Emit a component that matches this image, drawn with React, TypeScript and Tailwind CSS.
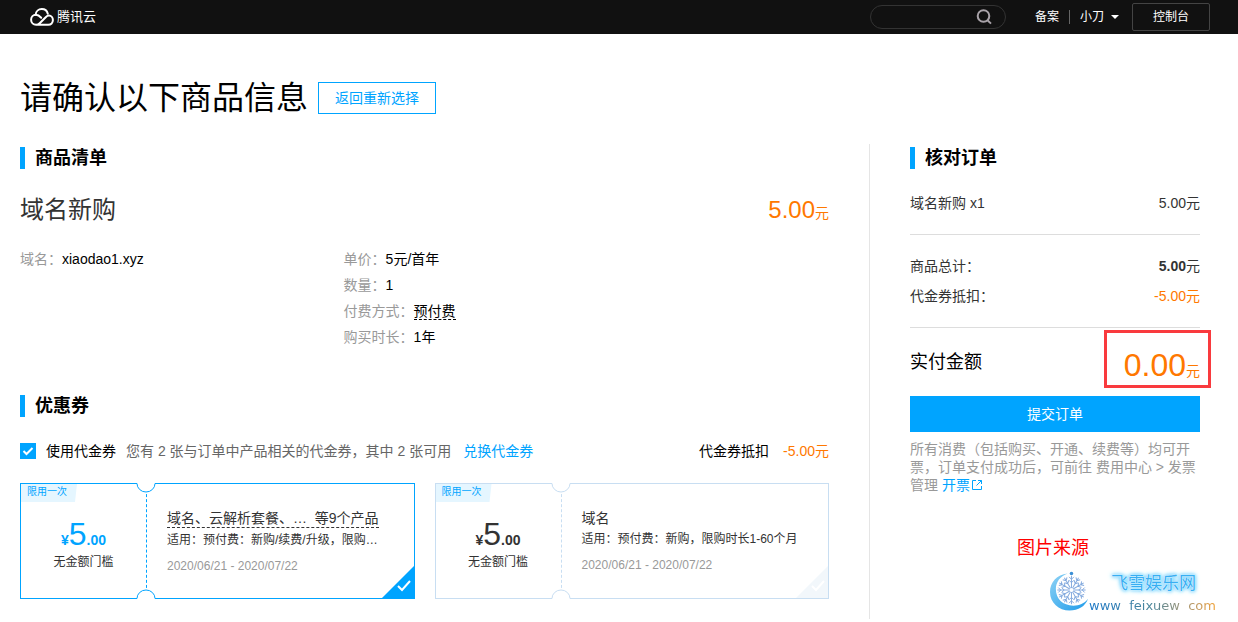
import { useState } from "react";
import type { ReactNode } from "react";

interface Coupon {
  id: number;
  title: string;
  usage: string;
  period: string;
  underlined?: boolean;
}

const coupons: Coupon[] = [
  {
    id: 1,
    title: "域名、云解析套餐、…  等9个产品",
    usage: "适用：预付费：新购/续费/升级，限购…",
    period: "2020/06/21 - 2020/07/22",
    underlined: true,
  },
  {
    id: 2,
    title: "域名",
    usage: "适用：预付费：新购，限购时长1-60个月",
    period: "2020/06/21 - 2020/07/22",
  },
];

const productSpecs = [
  { label: "单价：", value: "5元/首年" },
  { label: "数量：", value: "1" },
  { label: "付费方式：", value: "预付费", underlined: true },
  { label: "购买时长：", value: "1年" },
];

function CloudLogo() {
  return (
    <svg
      className="w-6 h-[18px]"
      viewBox="0 0 24 18"
      fill="none"
      stroke="currentColor"
      strokeWidth="2"
      strokeLinecap="round"
      strokeLinejoin="round"
    >
      <path d="M5.6 6.800C5.800 3.400 8.500 1.100 11.800 1.100c3 0 5.300 1.900 6 4.700" />
      <path d="M11.200 9.700C9.600 8 8.200 6.800 5.900 6.800 3.200 6.800 1.100 9 1.100 11.800s2.200 5 5 5c1.500 0 2.500-.5 3.600-1.600l6-6c.9-.9 1.900-1.600 3.300-1.600 2.200 0 3.900 1.900 3.900 4.500 0 2.700-1.900 4.700-4.600 4.700H6.500" />
    </svg>
  );
}

function Header() {
  return (
    <header className="flex items-center justify-between h-[34px] pl-[30px] pr-7 bg-[#111] text-white text-xs">
      <a href="#" className="flex items-center gap-[3px] text-[13px]">
        <CloudLogo />
        腾讯云
      </a>
      <div className="flex items-center">
        <div className="relative mr-[29px]">
          <input
            type="search"
            aria-label="搜索"
            className="block w-[136px] h-6 pl-3 pr-8 rounded-full border border-[#333] bg-transparent outline-none"
          />
          <svg
            className="absolute right-[14px] top-1 w-4 h-4 text-[#a9a3a9] pointer-events-none"
            viewBox="0 0 16 16"
            fill="none"
            stroke="currentColor"
            strokeWidth="2"
          >
            <circle cx="7.500" cy="7" r="5.800" />
            <path d="M11.500 11.200 15 14.600" />
          </svg>
        </div>
        <a href="#">备案</a>
        <span className="w-px h-[14px] mx-[10px] bg-[#666]" />
        <button type="button" className="flex items-center gap-[7px] mr-[13px]">
          小刀
          <svg className="w-2 h-1" viewBox="0 0 8 4" fill="currentColor">
            <path d="M0 0h8L4 4z" />
          </svg>
        </button>
        <a
          href="#"
          className="flex items-center justify-center w-[78px] h-7 border border-[#444] rounded-xs"
        >
          控制台
        </a>
      </div>
    </header>
  );
}

function SectionTitle({ children }: { children: ReactNode }) {
  return (
    <h2 className="flex items-center gap-[10px] text-lg leading-7 font-bold">
      <span className="w-[5px] h-[22px] bg-[#00a4ff]" />
      {children}
    </h2>
  );
}

interface CouponCardProps {
  coupon: Coupon;
  selected: boolean;
  onSelect: () => void;
}

function CouponCard({ coupon, selected, onSelect }: CouponCardProps) {
  return (
    <button
      type="button"
      aria-pressed={selected}
      onClick={onSelect}
      className={`relative flex h-[116px] border text-left text-[#333] ${
        selected ? "border-[#00a4ff]" : "border-[#c8def2]"
      }`}
    >
      {/* Tag */}
      <span className="absolute left-0 top-0 h-[18px] pl-[6px] pr-[10px] bg-[#e5f6ff] text-[#00a4ff] text-[10px] leading-4 [clip-path:polygon(0_0,100%_0,calc(100%-2px)_100%,0_100%)]">
        限用一次
      </span>

      {/* Amount */}
      <span
        className={`flex flex-col items-center justify-center w-[126px] h-full shrink-0 border-r border-dashed pt-2 ${
          selected ? "border-[#00a4ff]" : "border-[#c8def2]"
        }`}
      >
        <span
          className={`flex items-baseline text-sm leading-7 font-bold ${
            selected ? "text-[#00a4ff]" : ""
          }`}
        >
          ¥<span className="text-[32px] leading-7 font-normal">5</span>.00
        </span>
        <span className="text-xs">无金额门槛</span>
      </span>

      {/* Notches */}
      {["top-[-2px]", "bottom-[-2px] rotate-180"].map((position) => (
        <svg
          key={position}
          className={`absolute left-[115px] w-5 h-3 ${position} ${
            selected ? "text-[#00a4ff]" : "text-[#c8def2]"
          }`}
          viewBox="0 0 20 12"
        >
          <path d="M1 0h18v2a9 8.500 0 0 1-18 0z" fill="#fff" />
          <path d="M1 1.500a9 8.500 0 0 0 18 0" fill="none" stroke="currentColor" />
        </svg>
      ))}

      {/* Description */}
      <span className="flex flex-col items-start justify-center h-full pl-5 text-xs">
        <span
          className={`text-sm leading-[18px] whitespace-pre ${
            coupon.underlined ? "border-b border-dashed border-[#333]" : ""
          }`}
        >
          {coupon.title}
        </span>
        <span className="leading-6">{coupon.usage}</span>
        <span className="mt-[6px] leading-4 text-[#999]">{coupon.period}</span>
      </span>

      {/* Corner mark */}
      <svg
        className={`absolute right-0 bottom-0 w-8 h-8 ${
          selected ? "text-[#00a4ff]" : "text-[#f2f7fb]"
        }`}
        viewBox="0 0 32 32"
      >
        <path d="M32 0v32H0z" fill="currentColor" />
        <path d="m16 20 4 4 8-9" fill="none" stroke="#fff" strokeWidth="2" />
      </svg>
    </button>
  );
}

function SnowMoon() {
  const rays = [0, 30, 60, 90, 120, 150, 180, 210, 240, 270, 300, 330];

  return (
    <svg className="w-10 h-[42px]" viewBox="0 0 40 42" fill="none">
      <defs>
        <linearGradient id="moon" x1="0" y1="0" x2="1" y2="1">
          <stop offset="0" stopColor="#8fd3f5" />
          <stop offset="1" stopColor="#1f9bea" />
        </linearGradient>
      </defs>
      <path
        d="M18 3C7 4 0 12 0 22c0 11 9 19 20 19 9 0 16-4 19-12-4 5-9 7-15 7C13 36 6 29 6 19 6 12 10 6 18 3z"
        fill="url(#moon)"
      />
      {rays.map((angle) => (
        <g
          key={angle}
          transform={`rotate(${angle} 22 20)`}
          stroke="#84aade"
          strokeWidth="1"
        >
          <path d="M22 18V5.500M22 9l-2.500-2.500M22 9l2.500-2.500M22 12.500l-2.500-2.500M22 12.500l2.500-2.500" />
        </g>
      ))}
      <circle cx="22" cy="3" r="1.800" fill="#3b8fd6" />
    </svg>
  );
}

function SourceCredit() {
  return (
    <div className="mt-10 ml-[107px]">
      <p className="text-lg leading-7 text-[#f00]">图片来源</p>
      <div className="flex mt-2 ml-[33px] -mr-4">
        <SnowMoon />
        <div className="whitespace-nowrap">
          <div className="ml-[22px] text-[17px] leading-7 text-[#38aef2] [text-shadow:0_0_1px_#fff,0_0_2px_#fff,0_0_3px_#4fc8ff,0_0_4px_#4fc8ff,0_0_5px_#4fc8ff]">
            飞雪娱乐网
          </div>
          <div className="text-[13px] leading-4 font-[DejaVu_Sans,sans-serif] whitespace-pre text-transparent bg-clip-text bg-linear-to-r from-[#1a78c8] via-[#4a8598] to-[#f0a030]">
            www  feixuew  com
          </div>
        </div>
      </div>
    </div>
  );
}

function OrderSummary() {
  return (
    <aside className="w-[290px] shrink-0 text-sm text-[#333]">
      <div className="text-black">
        <SectionTitle>核对订单</SectionTitle>
      </div>
      <div className="flex justify-between mt-[19px] pb-[19px] leading-6 border-b border-[#ddd]">
        <span>域名新购 x1</span>
        <span>5.00元</span>
      </div>
      <div className="py-4 leading-[30px] border-b border-[#ddd]">
        <div className="flex justify-between">
          <span>商品总计：</span>
          <span>
            <b>5.00</b>元
          </span>
        </div>
        <div className="flex justify-between">
          <span>代金券抵扣：</span>
          <span className="text-[#ff7800]">-5.00元</span>
        </div>
      </div>
      <div className="relative flex items-center justify-between h-[68px]">
        <span className="text-lg text-black">实付金额</span>
        <span className="mt-2 text-[#ff7800]">
          <span className="text-[32px]">0.00</span>元
        </span>
        <span className="absolute right-[-11px] top-[2px] w-[107px] h-[58px] border-3 border-[#f93a3e]" />
      </div>
      <button type="button" className="block w-full h-9 bg-[#00a4ff] text-white">
        提交订单
      </button>
      <p className="mt-2 leading-[18px] text-[#999]">
        所有消费（包括购买、开通、续费等）均可开票，订单支付成功后，可前往 费用中心 &gt; 发票管理{" "}
        <a href="#" className="inline-block text-[#00a4ff]">
          开票
          <svg
            className="inline w-3 h-3 ml-px align-[-1px]"
            viewBox="0 0 12 12"
            fill="none"
            stroke="currentColor"
          >
            <path d="M5 1.500H1.500v9h9V7M7 1.500h3.500V5M10.500 1.500 5.500 6.500" />
          </svg>
        </a>
      </p>
      <SourceCredit />
    </aside>
  );
}

export default function App() {
  const [useVoucher, setUseVoucher] = useState(true);
  const [selectedId, setSelectedId] = useState(1);

  return (
    <div className="font-[Liberation_Sans,Noto_Sans_CJK_SC,sans-serif] text-sm text-black">
      <Header />

      <main className="pl-5 pr-[38px] pt-10">
        <div className="flex items-center gap-[10px]">
          <h1 className="text-[32px] leading-[48px]">请确认以下商品信息</h1>
          <button
            type="button"
            className="w-[118px] h-8 border border-[#00a4ff] text-[#00a4ff]"
          >
            返回重新选择
          </button>
        </div>

        <div className="flex mt-[22px]">
          <div className="flex-1 pr-10 pb-5 mr-10 border-r border-[#e5e5e5]">
            <SectionTitle>商品清单</SectionTitle>

            <div className="flex items-baseline justify-between mt-5 leading-9">
              <h3 className="text-2xl leading-9 text-[#333]">域名新购</h3>
              <span className="text-[#ff7800]">
                <span className="text-2xl leading-9">5.00</span>元
              </span>
            </div>

            <div className="flex mt-[15px] leading-[26px]">
              <div className="w-2/5">
                <span className="text-[#999]">域名：</span>xiaodao1.xyz
              </div>
              <ul>
                {productSpecs.map((spec) => (
                  <li key={spec.label}>
                    <span className="text-[#999]">{spec.label}</span>
                    <span
                      className={
                        spec.underlined ? "border-b border-dashed border-black" : ""
                      }
                    >
                      {spec.value}
                    </span>
                  </li>
                ))}
              </ul>
            </div>

            <div className="mt-[42px]">
              <SectionTitle>优惠券</SectionTitle>
            </div>

            <div className="flex items-center mt-[19px] leading-6">
              <label className="flex items-center gap-[10px]">
                <span className="relative w-4 h-4">
                  <input
                    type="checkbox"
                    checked={useVoucher}
                    onChange={(e) => setUseVoucher(e.target.checked)}
                    className="block w-4 h-4 appearance-none border border-[#00a4ff] checked:bg-[#00a4ff]"
                  />
                  <svg
                    className="absolute inset-0 w-4 h-4 pointer-events-none"
                    viewBox="0 0 16 16"
                    fill="none"
                    stroke="#fff"
                    strokeWidth="2"
                  >
                    <path d="m3.500 8 3 3 6-6" />
                  </svg>
                </span>
                使用代金券
              </label>
              <span className="ml-[10px] text-[#666]">
                您有 2 张与订单中产品相关的代金券，其中 2 张可用
              </span>
              <a href="#" className="ml-3 text-[#00a4ff]">
                兑换代金券
              </a>
              <span className="ml-auto">代金券抵扣</span>
              <span className="ml-[14px] text-[#ff7800]">-5.00元</span>
            </div>

            <div className="grid grid-cols-2 gap-5 mt-5">
              {coupons.map((coupon) => (
                <CouponCard
                  key={coupon.id}
                  coupon={coupon}
                  selected={coupon.id === selectedId}
                  onSelect={() => setSelectedId(coupon.id)}
                />
              ))}
            </div>
          </div>

          <OrderSummary />
        </div>
      </main>
    </div>
  );
}
